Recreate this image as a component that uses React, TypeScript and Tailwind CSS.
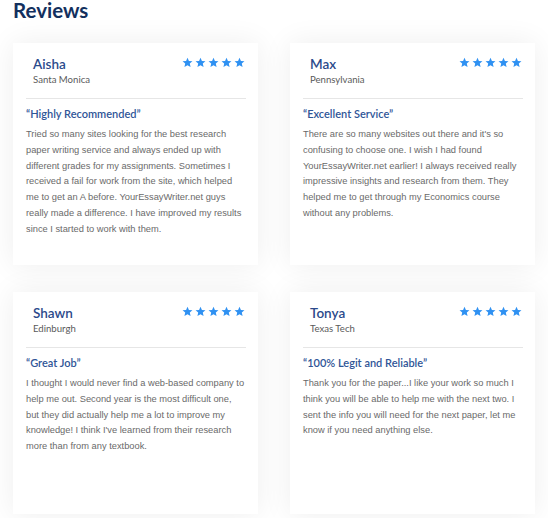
import React from 'react';

type Review = {
  name: string;
  place: string;
  title: string;
  body: string;
};

const reviews: Review[] = [
  {
    name: 'Aisha',
    place: 'Santa Monica',
    title: '“Highly Recommended”',
    body: 'Tried so many sites looking for the best research paper writing service and always ended up with different grades for my assignments. Sometimes I received a fail for work from the site, which helped me to get an A before. YourEssayWriter.net guys really made a difference. I have improved my results since I started to work with them.',
  },
  {
    name: 'Max',
    place: 'Pennsylvania',
    title: '“Excellent Service”',
    body: "There are so many websites out there and it's so confusing to choose one. I wish I had found YourEssayWriter.net earlier! I always received really impressive insights and research from them. They helped me to get through my Economics course without any problems.",
  },
  {
    name: 'Shawn',
    place: 'Edinburgh',
    title: '“Great Job”',
    body: "I thought I would never find a web-based company to help me out. Second year is the most difficult one, but they did actually help me a lot to improve my knowledge! I think I've learned from their research more than from any textbook.",
  },
  {
    name: 'Tonya',
    place: 'Texas Tech',
    title: '“100% Legit and Reliable”',
    body: 'Thank you for the paper...I like your work so much I think you will be able to help me with the next two. I sent the info you will need for the next paper, let me know if you need anything else.',
  },
];

// five-point star, filled
const Star = () => (
  <svg width="11" height="11" viewBox="0 0 24 24" className="fill-[#2f91f2]">
    <path d="M12 1.5l3.1 7.1 7.7.7-5.8 5.1 1.7 7.6L12 18l-6.7 4 1.7-7.6-5.8-5.1 7.7-.7z" />
  </svg>
);

const ReviewCard = ({ review }: { review: Review }) => (
  <div className="h-[222px] bg-white pt-[12px] pl-[13px] pr-[12px] shadow-[0_0_28px_rgba(0,0,0,0.07)]">
    <div className="flex justify-between">
      <div className="px-[7px]">
        <div className="text-[13.5px] leading-[18px] font-semibold text-[#2b4a8b]">{review.name}</div>
        <div className="text-[9.6px] leading-[13px] text-[#5a5a5a]">{review.place}</div>
      </div>
      <div className="mt-[2px] mr-[1px] flex gap-[2px]">
        {Array.from({ length: 5 }).map((_, i) => (
          <Star key={i} />
        ))}
      </div>
    </div>

    <div className="mt-[12px] border-t border-[#e6e6e6]" />

    <div className="mt-[8px] text-[11px] leading-[14px] font-semibold text-[#2f5597]">{review.title}</div>
    <p
      className="mt-[6px] text-[9.3px] leading-[15.8px] text-[#6a6a6a]"
      style={{ fontFamily: '"Liberation Sans", Arial, sans-serif' }}
    >
      {review.body}
    </p>
  </div>
);

const App = () => {
  return (
    <div
      className="min-h-screen bg-white px-[13px]"
      style={{ fontFamily: 'Lato, "Noto Sans", sans-serif' }}
    >
      <h2 className="text-[20.5px] leading-[20px] font-bold text-[#13305e]">Reviews</h2>

      <div className="mt-[23px] grid grid-cols-2 gap-x-[32px] gap-y-[27px]">
        {reviews.map((r) => (
          <ReviewCard key={r.name} review={r} />
        ))}
      </div>
    </div>
  );
};

export default App;
